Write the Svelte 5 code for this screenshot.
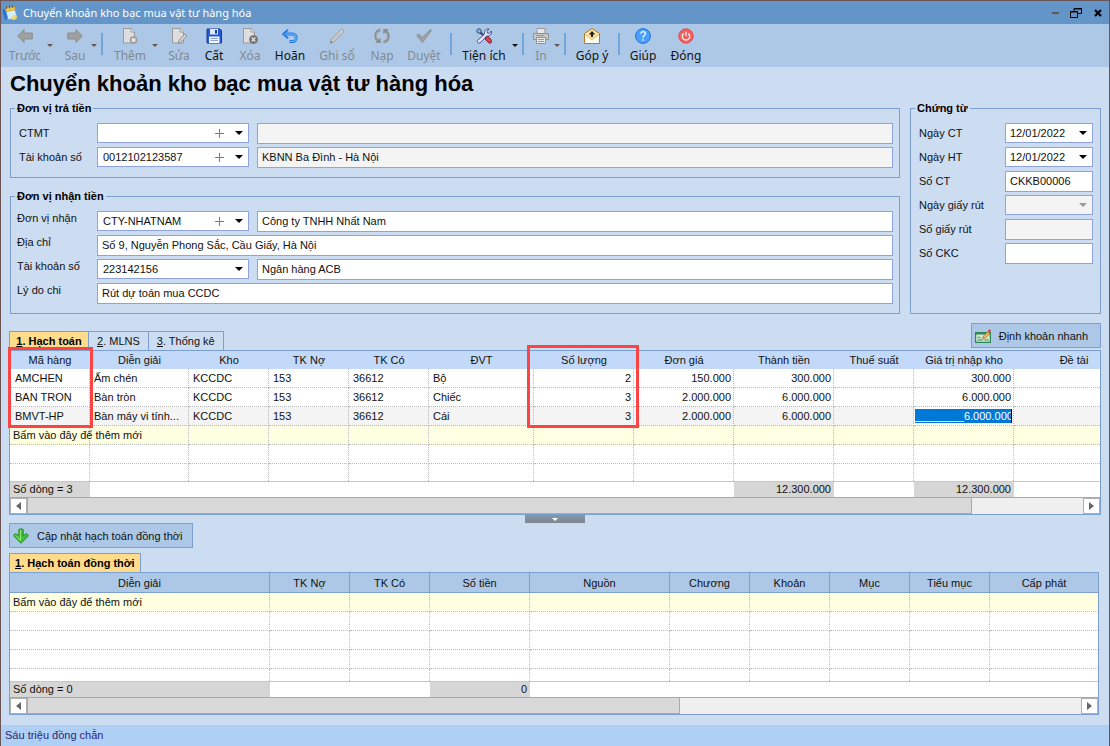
<script>
  const tools = [
    { label: 'Trước', icon: 'prev', w: 40, gap: 0, caret: true, off: true },
    { label: 'Sau', icon: 'next', w: 28, gap: 6, caret: true, off: true, sep: true },
    { label: 'Thêm', icon: 'add', w: 40, gap: 5, caret: true, off: true },
    { label: 'Sửa', icon: 'edit', w: 38, gap: 0, off: true },
    { label: 'Cất', icon: 'save', w: 32, gap: 0 },
    { label: 'Xóa', icon: 'remove', w: 40, gap: 0, off: true },
    { label: 'Hoãn', icon: 'undo', w: 40, gap: 0 },
    { label: 'Ghi sổ', icon: 'pen', w: 54, gap: 0, off: true },
    { label: 'Nạp', icon: 'reload', w: 36, gap: 0, off: true },
    { label: 'Duyệt', icon: 'check', w: 48, gap: 0, off: true, sep: true },
    { label: 'Tiện ích', icon: 'tools', w: 52, gap: 4, caret: true, sep: true },
    { label: 'In', icon: 'print', w: 22, gap: 4, caret: true, off: true, sep: true },
    { label: 'Góp ý', icon: 'mail', w: 48, gap: 0, sep: true },
    { label: 'Giúp', icon: 'help', w: 42, gap: 0 },
    { label: 'Đóng', icon: 'power', w: 44, gap: 0 }
  ];

  const cols = [
    { t: 'Mã hàng', w: 80 },
    { t: 'Diễn giải', w: 99 },
    { t: 'Kho', w: 80 },
    { t: 'TK Nợ', w: 80 },
    { t: 'TK Có', w: 80 },
    { t: 'ĐVT', w: 105 },
    { t: 'Số lượng', w: 100, num: true },
    { t: 'Đơn giá', w: 100, num: true },
    { t: 'Thành tiền', w: 100, num: true, sum: '12.300.000' },
    { t: 'Thuế suất', w: 80 },
    { t: 'Giá trị nhập kho', w: 100, num: true, sum: '12.300.000' },
    { t: 'Đề tài' }
  ];
  const rows = [
    ['AMCHEN', 'Ấm chén', 'KCCDC', '153', '36612', 'Bộ', '2', '150.000', '300.000', '', '300.000', ''],
    ['BAN TRON', 'Bàn tròn', 'KCCDC', '153', '36612', 'Chiếc', '3', '2.000.000', '6.000.000', '', '6.000.000', ''],
    ['BMVT-HP', 'Bàn máy vi tính...', 'KCCDC', '153', '36612', 'Cái', '3', '2.000.000', '6.000.000', '', '6.000.000', '']
  ];

  const cols2 = [
    { t: 'Diễn giải', w: 260 },
    { t: 'TK Nợ', w: 80 },
    { t: 'TK Có', w: 80 },
    { t: 'Số tiền', w: 100, num: true, sum: '0' },
    { t: 'Nguồn', w: 140 },
    { t: 'Chương', w: 80 },
    { t: 'Khoản', w: 80 },
    { t: 'Mục', w: 80 },
    { t: 'Tiểu mục', w: 80 },
    { t: 'Cấp phát' }
  ];
</script>

{#snippet icon(name)}
  <svg class="icon" width="16" height="16" viewBox="0 0 16 16" aria-hidden="true">
    {#if name === 'prev'}
      <path d="M.7 8 7 1.5V5h8.3v6H7v3.5z" fill="#a0a0a0" stroke="#8d8d8d" />
    {:else if name === 'next'}
      <path d="M15.3 8 9 1.5V5H.7v6H9v3.5z" fill="#a0a0a0" stroke="#8d8d8d" />
    {:else if name === 'add' || name === 'edit' || name === 'remove'}
      <path d="M1.500.500h8l3 3.200V15H1.500z" fill="#dedede" stroke="#999" />
      <path d="M9 .500V4H12.500" fill="#f2f2f2" stroke="#999" />
      {#if name === 'add'}
        <circle cx="11.500" cy="12" r="3" fill="#e2e2e2" stroke="#999" stroke-width="1.500" />
      {:else if name === 'edit'}
        <path d="m7 15.500 1-3.500 6-6 2 2-6 6z" fill="#d0d0d0" stroke="#949494" />
      {:else}
        <circle cx="11.500" cy="11.500" r="4" fill="#777" stroke="#777" />
        <path d="m9.700 9.700 3.600 3.600m0-3.600-3.600 3.600" stroke="#eee" stroke-width="1.200" />
      {/if}
    {:else if name === 'save'}
      <path d="M1 1h13l1.500 1.500V15H1z" fill="#2858d0" stroke="#1737a0" />
      <path d="M4 1h8v5.500H4z" fill="#dce9ff" />
      <path d="M9 2h2v3.500H9z" fill="#1737a0" />
      <path d="M3 8.500h10.500V15H3z" fill="#f2f6ff" />
      <path d="M4.500 10.500H12M4.500 12.500H12" stroke="#8ca6dc" />
    {:else if name === 'undo'}
      <path d="M2 6h8.500a3.500 3.500 0 0 1 0 7.500H7.500" fill="none" stroke="#1b78e6" stroke-width="2.800" />
      <path d="M6 1.800 1.200 6 6 10.200" fill="none" stroke="#1b78e6" stroke-width="1.800" />
      <path d="M2.500 6h8a3.500 3.500 0 0 1 0 7.500H8" fill="none" stroke="#7fc4fb" stroke-width="1" />
    {:else if name === 'pen'}
      <path d="m1.500 15 1-4L12 1.500q1.800-.6 2.600 1.200v1.300L5 13.500z" fill="#d6d6d6" stroke="#959595" />
      <path d="m4 12 8.500-8.500" stroke="#b2b2b2" />
      <path d="m1 15.500 1-3 2 2z" fill="#888" />
    {:else if name === 'reload'}
      <path d="M6.500 2C1 3 .2 9.500 4.200 13M9.500 14C15 13 15.800 6.500 11.800 3" fill="none" stroke="#858585" stroke-width="2.600" />
      <path d="M6.300 2.100C1.500 3.300.8 9.200 4.200 12.500M9.700 13.900C14.500 12.700 15.200 6.800 11.800 3.500" fill="none" stroke="#bcbcbc" stroke-width=".8" />
      <path d="M1.200 15h5.600V9.800zM14.800 1H9.200v5.200z" fill="#8c8c8c" />
    {:else if name === 'check'}
      <path d="m.8 7.500 2-1.500 3.400 3.500L14.500 1.500l1 .8L6.500 14.500z" fill="#a2a2a2" stroke="#8d8d8d" />
    {:else if name === 'tools'}
      <path d="m3.500 3.500 9 9" stroke="#33457e" stroke-width="2.200" />
      <circle cx="3" cy="3" r="2.200" fill="#86bdf0" stroke="#33457e" />
      <path d="m9.800 9.500 2-1.500 4 4.500c.4 1.800-1.300 3-2.800 2.600L9 11z" fill="#df3f42" stroke="#7a2434" />
      <path d="M1.500 12.500 8.600 6c-1-3 1.600-5.600 4.600-5L11 3.200l.3 1.900 2 .3L15.400 3c.8 3-1.900 5.600-4.700 4.900L4 15c-1.500.7-3.500-.9-2.500-2.500z" fill="#e6e9fb" stroke="#4b4d92" />
    {:else if name === 'print'}
      <path d="M4 .5h8V6H4z" fill="#e6e6e6" stroke="#999" />
      <path d="M.5 5.500h15v6H.5z" fill="#c7c7c7" stroke="#929292" />
      <path d="M3.500 9.500h9v6h-9z" fill="#ececec" stroke="#929292" />
      <path d="M5 11.500h6M5 13.500h6M3 7.500h8" stroke="#999" />
    {:else if name === 'mail'}
      <path d="m.5 5.500 7.500-5 7.500 5v10H.5z" fill="#ffe49c" stroke="#b57b23" />
      <path d="m1 6.500 7 5 7-5V15H1z" fill="#fffdf2" />
      <path d="m1 6.500 7 5 7-5" fill="none" stroke="#e2b765" />
      <path d="M8 3 4.800 6.500H7V9h2V6.500h2.200z" fill="#1e1e1e" />
    {:else if name === 'help'}
      <circle cx="8" cy="8" r="7.400" fill="#4da0fc" stroke="#1c70d8" />
      <path d="M5.700 5.700C5.700 2.900 10.400 2.900 10.400 5.700 10.400 7.600 8 7.500 8 9.700M8 11v1.700" fill="none" stroke="#fff" stroke-width="1.200" />
    {:else if name === 'power'}
      <circle cx="8" cy="8" r="7.200" fill="#f06060" stroke="#e44c4c" />
      <path d="M5.700 5.500a3.700 3.700 0 1 0 4.600 0M8 3.800V8" fill="none" stroke="#fff" stroke-width="1.200" />
    {:else if name === 'quick'}
      <path d="M.6 4.500h14.800v9.900H.6z" fill="#cfe8cf" stroke="#2d8653" stroke-width="1.200" />
      <path d="M.5 4h15v2.500H.5z" fill="#2d8653" />
      <path d="M2.500 9.500h3M2.500 12h5M9.500 12h4" stroke="#64a981" stroke-width="1.500" />
      <path d="m7.500 11 1-3L13 3.500l2 2-4.700 4.500z" fill="#f3b45c" stroke="#9b6933" stroke-width=".7" />
      <path d="m12.500 3.500 2-2.500 1.500 1.500-1.500 2.500z" fill="#db4040" />
    {:else if name === 'down'}
      <path d="M5.800 1.500Q8 0 10.200 1.500V8l2.800-2.300q2.500.3 2.200 2.300L8 15.300.8 8q-.3-2 2.200-2.300L5.800 8z" fill="#42bf38" stroke="#238c28" />
      <path d="M7.500 2v11M2.500 7.200l5 5" fill="none" stroke="#92e77b" />
    {:else if name === 'app'}
      <path d="m.5 5 4-2.500L7 13l-4 2z" fill="#2b6fd0" />
      <path d="M3.500 4 13 2.500 15 12.500 6 15z" fill="#d4ecff" stroke="#4f9df0" />
      <path d="m3 3 9.500-1.500.8 3.200L4 6.500z" fill="#f6cd3f" stroke="#b68a22" stroke-width=".6" />
      <path d="M4.500 1v3M7.500.500v3M10.500 0v3" stroke="#645a46" />
      <path d="m9 14 3-4.500 3 1-.5 3.500-3 1z" fill="#f4d76c" />
    {/if}
  </svg>
{/snippet}

{#snippet combo(id, value, plus, off = false)}
  <div class="combo" class:off>
    <select {id} disabled={off}><option>{value}</option></select>
    {#if plus}
      <button class="plus" type="button" aria-label="Thêm nhanh">
        <svg width="9" height="9" viewBox="0 0 9 9"><path d="M4 0h1v4h4v1H5v4H4V5H0V4h4z" fill="#2f8fe4" /></svg>
      </button>
    {/if}
    <span class="arrow"></span>
  </div>
{/snippet}

{#snippet scroller(size)}
  <div class="scroller">
    <button type="button" aria-label="Cuộn trái"><svg width="5" height="8" viewBox="0 0 5 8"><path d="M5 0v8L0 4z" fill="#666" /></svg></button>
    <div class="track"><div class="thumb" style="width: {size}%"></div></div>
    <button type="button" aria-label="Cuộn phải"><svg width="5" height="8" viewBox="0 0 5 8"><path d="M0 0v8l5-4z" fill="#666" /></svg></button>
  </div>
{/snippet}

{#snippet grid(list, data, empty, count)}
  <table>
    <colgroup>
      {#each list as c}<col style={c.w ? `width: ${c.w}px` : ''} />{/each}
    </colgroup>
    <thead>
      <tr>{#each list as c}<th scope="col">{c.t}</th>{/each}</tr>
    </thead>
    <tbody>
      {#each data as row, r}
        <tr class:current={r === data.length - 1}>
          {#each row as cell, i}
            <td class:num={list[i].num} class:editing={r === 2 && i === 10}>
              {#if r === 2 && i === 10}
                <input class="editor" aria-label={list[i].t} value="________{cell}" />
              {:else}{cell}{/if}
            </td>
          {/each}
        </tr>
      {/each}
      <tr class="new">
        {#each list as c, i}<td>{i === 0 ? 'Bấm vào đây để thêm mới' : ''}</td>{/each}
      </tr>
      {#each Array(empty) as _, n}
        <tr class:last={n === empty - 1}>{#each list as c}<td></td>{/each}</tr>
      {/each}
    </tbody>
    <tfoot>
      <tr>
        {#each list as c, i}
          <td class:sum={i === 0 || c.sum} class:num={c.num}>{i === 0 ? `Số dòng = ${count}` : (c.sum ?? '')}</td>
        {/each}
      </tr>
    </tfoot>
  </table>
{/snippet}

<div class="window">
  <header class="titlebar">
    {@render icon('app')}
    <span class="caption">Chuyển khoản kho bạc mua vật tư hàng hóa</span>
    <button type="button" aria-label="Thu nhỏ"><svg width="12" height="12" viewBox="0 0 12 12"><path d="M4 6h7" stroke="#66564f" stroke-width="2" /></svg></button>
    <button type="button" aria-label="Khôi phục"><svg width="12" height="12" viewBox="0 0 12 12" fill="none" stroke="#000"><path d="M4 4V1.500h7.500v5H7.500M4 2h8M.500 5H7.500M.500 4.500h7v6h-7z" /></svg></button>
    <button type="button" aria-label="Đóng cửa sổ"><svg width="12" height="12" viewBox="0 0 12 12"><path d="m3 3 6 6m0-6L3 9" stroke="#000" stroke-width="2.200" /></svg></button>
  </header>

  <nav class="toolbar" aria-label="Thanh công cụ">
    {#each tools as t}
      <button class="tool" type="button" disabled={t.off} style="width: {t.w}px; margin-left: {t.gap}px">
        {@render icon(t.icon)}
        <span>{t.label}</span>
      </button>
      {#if t.caret}
        <button class="more" type="button" disabled={t.off} aria-label="{t.label}: tùy chọn"><i></i></button>
      {/if}
      {#if t.sep}<span class="sep"></span>{/if}
    {/each}
  </nav>

  <main>
    <h1>Chuyển khoản kho bạc mua vật tư hàng hóa</h1>

    <form class="form">
      <div class="parties">
        <fieldset class="payer">
          <legend>Đơn vị trả tiền</legend>
          <div class="fields">
            <label for="ctmt">CTMT</label>
            {@render combo('ctmt', '', true)}
            <input aria-label="Tên CTMT" readonly />
            <label for="acc1">Tài khoản số</label>
            {@render combo('acc1', '0012102123587', true)}
            <input aria-label="Kho bạc" readonly value="KBNN Ba Đình - Hà Nội" />
          </div>
        </fieldset>
        <fieldset class="payee">
          <legend>Đơn vị nhận tiền</legend>
          <div class="fields">
            <label for="recv">Đơn vị nhận</label>
            {@render combo('recv', 'CTY-NHATNAM', true)}
            <input aria-label="Tên đơn vị nhận" value="Công ty TNHH Nhất Nam" />
            <label for="addr">Địa chỉ</label>
            <input id="addr" class="wide" value="Số 9, Nguyễn Phong Sắc, Cầu Giấy, Hà Nội" />
            <label for="acc2">Tài khoản số</label>
            {@render combo('acc2', '223142156', false)}
            <input aria-label="Ngân hàng" value="Ngân hàng ACB" />
            <label for="why">Lý do chi</label>
            <input id="why" class="wide" value="Rút dự toán mua CCDC" />
          </div>
        </fieldset>
      </div>
      <fieldset class="voucher">
        <legend>Chứng từ</legend>
        <div class="fields">
          <label for="dct">Ngày CT</label>
          {@render combo('dct', '12/01/2022', false)}
          <label for="dht">Ngày HT</label>
          {@render combo('dht', '12/01/2022', false)}
          <label for="sct">Số CT</label>
          <input id="sct" value="CKKB00006" />
          <label for="dgr">Ngày giấy rút</label>
          {@render combo('dgr', '', false, true)}
          <label for="sgr">Số giấy rút</label>
          <input id="sgr" readonly />
          <label for="ckc">Số CKC</label>
          <input id="ckc" />
        </div>
      </fieldset>
    </form>

    <section class="entries">
      <div class="tabrow">
        <div class="tabs" role="tablist">
          <button role="tab" aria-selected="true" class="tab active"><u>1</u>. Hạch toán</button>
          <button role="tab" aria-selected="false" class="tab"><u>2</u>. MLNS</button>
          <button role="tab" aria-selected="false" class="tab"><u>3</u>. Thống kê</button>
        </div>
        <button class="action" type="button">{@render icon('quick')}<span>Định khoản nhanh</span></button>
      </div>
      <div class="marked">
        <div class="grid plain">
          <div class="clip">{@render grid(cols, rows, 2, 3)}</div>
          {@render scroller(89.5)}
        </div>
        <span class="mark code"></span>
        <span class="mark qty"></span>
      </div>
    </section>

    <div class="splitter"><i></i></div>

    <section class="parallel">
      <button class="action" type="button">{@render icon('down')}<span>Cập nhật hạch toán đồng thời</span></button>
      <div class="tabs" role="tablist">
        <button role="tab" aria-selected="true" class="tab active"><u>1</u>. Hạch toán đồng thời</button>
      </div>
      <div class="grid lined">
        <div class="clip">{@render grid(cols2, [], 4, 0)}</div>
        {@render scroller(62)}
      </div>
    </section>
  </main>

  <footer class="status">Sáu triệu đồng chẵn</footer>
</div>

<style>
  :global(body) { margin: 0; }
  .window, .window * { box-sizing: border-box; }
  .window {
    display: flex;
    flex-direction: column;
    min-height: 100vh;
    border: 1px solid #6b5555;
    background: #ccdcf1;
    color: #111;
    font: 11px/16px "Liberation Sans", Arial, sans-serif;
  }
  button, input, select { font: inherit; color: inherit; margin: 0; }
  button { padding: 0; border: 0; background: none; }
  .icon { flex: none; display: block; }

  .titlebar {
    display: flex;
    align-items: center;
    gap: 10px;
    height: 23px;
    padding: 0 5px 0 1px;
    background: #6395c8;
    color: #fff;
    font: 11px/20px "Noto Sans", "Open Sans", sans-serif;
  }
  .caption { flex: 1; margin-left: -5px; }
  .titlebar button { display: flex; }

  .toolbar {
    display: flex;
    height: 43px;
    padding-left: 4px;
    background: #adc8e6;
    font: 12px/18px "Noto Sans", "Open Sans", sans-serif;
  }
  .tool {
    display: flex;
    flex-direction: column;
    align-items: center;
    gap: 3px;
    flex: none;
    padding-top: 4px;
    white-space: nowrap;
  }
  .tool:disabled { color: #828990; }
  .more { flex: none; width: 10px; padding: 0 0 0 2px; color: #111; }
  .more:disabled { color: #66564f; }
  .more i { display: block; border: 3px solid transparent; border-top-color: currentColor; border-bottom: 0; width: 6px; }
  .sep { flex: none; width: 2px; height: 22px; margin: 9px 2px 0; background: #71a5db; }

  main { padding: 0 8px 10px; }
  h1 { margin: 0; padding-left: 1px; font: bold 22px/33px "Liberation Sans", Arial, sans-serif; white-space: nowrap; color: #000; }

  .form { display: grid; grid-template-columns: 1fr 191px; gap: 10px; padding-left: 1px; }
  .parties { display: grid; gap: 10px; }
  fieldset { min-width: 0; margin: 0; padding: 5px 6px 8px; border: 1px solid #7ba0cf; }
  legend { margin-left: -2px; padding: 0 2px; font-weight: bold; color: #000; }
  .fields { display: grid; grid-template-columns: 80px 152px 1fr; grid-auto-rows: 24px; align-items: center; }
  .fields label { white-space: nowrap; }
  .payer label { padding-left: 2px; }
  .payee label { padding-bottom: 6px; }
  .fields input { width: 100%; min-width: 0; height: 21px; padding: 0 4px; border: 1px solid #8fa3de; border-radius: 0; background: #fff; }
  .fields input[readonly] { background: #f4f4f4; }
  .combo + input { margin-left: 8px; width: calc(100% - 8px); }
  .fields .wide { grid-column: 2 / 4; }
  .voucher .fields { grid-template-columns: 1fr 88px; padding: 0 1px 0 2px; }
  .voucher .combo + input { margin: 0; width: 100%; }

  .combo { position: relative; height: 20px; border: 1px solid #8fa3de; background: #fff; }
  .combo select { appearance: none; width: 100%; height: 100%; padding: 0 20px 0 5px; border: 0; border-radius: 0; background: none; display: block; }
  .voucher .combo select { padding-left: 4px; }
  .combo.off { background: #f4f4f4; }
  .plus { position: absolute; right: 24px; top: 5px; display: flex; }
  .arrow { position: absolute; right: 5px; top: 7px; border: 4px solid transparent; border-top-color: #000; border-bottom: 0; pointer-events: none; }
  .off .arrow { border-top-color: #999; }

  .tabrow { display: flex; justify-content: space-between; align-items: flex-end; height: 36px; }
  .tabs { display: flex; align-items: flex-end; }
  .tab { height: 19px; padding: 0 8px; border: 1px solid #7ba0cf; border-width: 1px 1px 0 0; white-space: nowrap; }
  .tab.active { min-width: 80px; padding: 0 5px; border-left-width: 1px; background: #ffdc8c; font-weight: bold; color: #000; }
  .action { display: flex; align-items: center; gap: 8px; height: 25px; padding: 0 12px 0 3px; border: 1px solid #7ba0cf; background: #adc8e6; white-space: nowrap; }
  .tabrow .action { align-self: flex-start; margin-top: 9px; }

  .marked { position: relative; }
  .mark { position: absolute; border: 3px solid #fc4444; pointer-events: none; }
  .mark.code { left: -1px; top: -3px; width: 85px; height: 81px; }
  .mark.qty { left: 518px; top: -5px; width: 112px; height: 83px; }

  .grid { border: 1px solid #7ba0cf; background: #fff; }
  .clip { overflow: hidden; }
  table { width: 100%; table-layout: fixed; border-spacing: 0; line-height: 14px; }
  .plain table { min-width: 1124px; }
  th { height: 18px; padding: 0; font-weight: normal; background: #c3d9fa; white-space: nowrap; }
  .lined th { height: 20px; background: #adc8e6; border: 1px solid #7ba0cf; border-width: 0 1px 1px 0; }
  .lined th:last-child { border-right: 0; }
  td { height: 19px; padding: 0 2px 0 4px; border: 1px dotted #b9b9b9; border-width: 0 1px 1px 0; white-space: nowrap; }
  td:first-child { padding-left: 5px; }
  td:last-child { border-right: 0; }
  .num { text-align: right; }
  .current { background: #f4f4f4; }
  .editing { background: #fff; padding: 0 1px; }
  .editor { display: block; width: 100%; height: 14px; padding: 0; border: 0; border-right: 1px solid #000; border-radius: 0; background: #0078d7; color: #fff; text-align: right; }
  .new { background: #ffffe1; }
  .new td:first-child { padding-left: 3px; }
  .last td { height: 17px; border-bottom: 0; }
  .lined .last td { height: 12px; }
  tfoot td, tfoot td:first-child { height: 16px; padding-left: 3px; border: 0 solid #b9cada; border-width: 1px 0 0; vertical-align: top; }
  tfoot .sum { background: #d6d6d6; }
  tfoot .num { padding-right: 3px; }

  .scroller { display: flex; height: 17px; border-top: 1px solid #a9a9a9; background: #efefef; }
  .scroller button { display: flex; align-items: center; justify-content: center; flex: none; width: 17px; border: 1px solid #b0b0b0; background: #fff; }
  .track { flex: 1; }
  .thumb { height: 100%; border: 1px solid #a9a9a9; border-top: 0; background: #d9d9d9; }

  .splitter { display: flex; justify-content: center; width: 60px; height: 8px; margin: 0 auto; background: linear-gradient(#7f97ae, #81868d); }
  .splitter i { align-self: center; border: 3px solid transparent; border-top-color: #fff; border-bottom: 0; }

  .parallel { margin-right: 2px; }
  .parallel .tabs { height: 24px; }
  .parallel .action { padding-right: 10px; }

  .status { margin-top: auto; height: 21px; padding: 2px 4px; background: #b0cff5; color: #28287c; }
</style>
